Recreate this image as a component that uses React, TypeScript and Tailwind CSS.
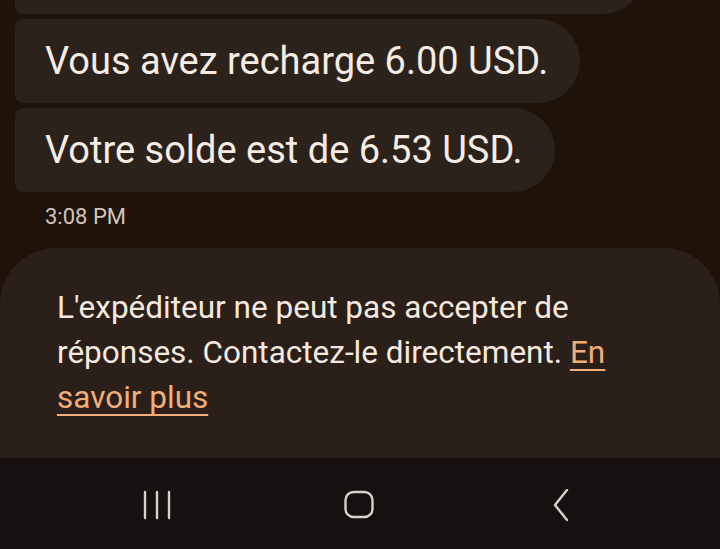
import React from 'react';

const bubbles = ['Vous avez recharge 6.00 USD.', 'Votre solde est de 6.53 USD.'];

export default function App() {
  return (
    <div className="w-[720px] h-[549px] overflow-hidden bg-[#1e1209] flex flex-col font-['Roboto',sans-serif]">
      {/* Messages */}
      <div className="flex flex-col gap-[5px] pl-[15px]">
        {/* previous bubble, cut off at top */}
        <div className="w-[628px] h-[80px] -mt-[66px] bg-[#2b221c] rounded-l-[8px] rounded-r-[40px]" />
        {bubbles.map((text) => (
          <div
            key={text}
            className="self-start h-[84px] flex items-center pl-[30px] pr-[32px] bg-[#2b221c] rounded-l-[8px] rounded-r-[42px] text-[38px] text-[#f7ece3]"
          >
            {text}
          </div>
        ))}
      </div>

      <div className="pl-[45px] mt-[13px] text-[22px] leading-[24px] text-[#d3c6bb]">3:08 PM</div>

      {/* Sender can't reply */}
      <div className="mt-[19px] flex-1 bg-[#2a1f19] rounded-t-[56px] pl-[57px] pr-[60px] pt-[37px]">
        <p className="text-[31.5px] leading-[45px] text-[#f5e9df]">
          L'expéditeur ne peut pas accepter de réponses. Contactez-le directement.{' '}
          <span className="text-[#f3ad78] underline underline-offset-[6px] decoration-[2px]">En savoir plus</span>
        </p>
      </div>

      {/* Nav bar */}
      <div className="h-[91px] shrink-0 bg-[#171010] flex items-center pl-[141px] gap-[170px]">
        <svg width="32" height="32" viewBox="0 0 32 32" className="mt-[3px]">
          <g stroke="#d8d2ce" strokeWidth="2.4" strokeLinecap="round">
            <line x1="4" y1="3" x2="4" y2="29" />
            <line x1="16" y1="3" x2="16" y2="29" />
            <line x1="28" y1="3" x2="28" y2="29" />
          </g>
        </svg>
        <svg width="32" height="32" viewBox="0 0 32 32" className="mt-[3px]">
          <rect x="2.5" y="3" width="27" height="25" rx="8" fill="none" stroke="#d8d2ce" strokeWidth="2.4" />
        </svg>
        <svg width="32" height="32" viewBox="0 0 32 32" className="mt-[3px]">
          <polyline points="22,1 10,16 22,31" fill="none" stroke="#d8d2ce" strokeWidth="2.4" strokeLinecap="round" strokeLinejoin="round" />
        </svg>
      </div>
    </div>
  );
}
